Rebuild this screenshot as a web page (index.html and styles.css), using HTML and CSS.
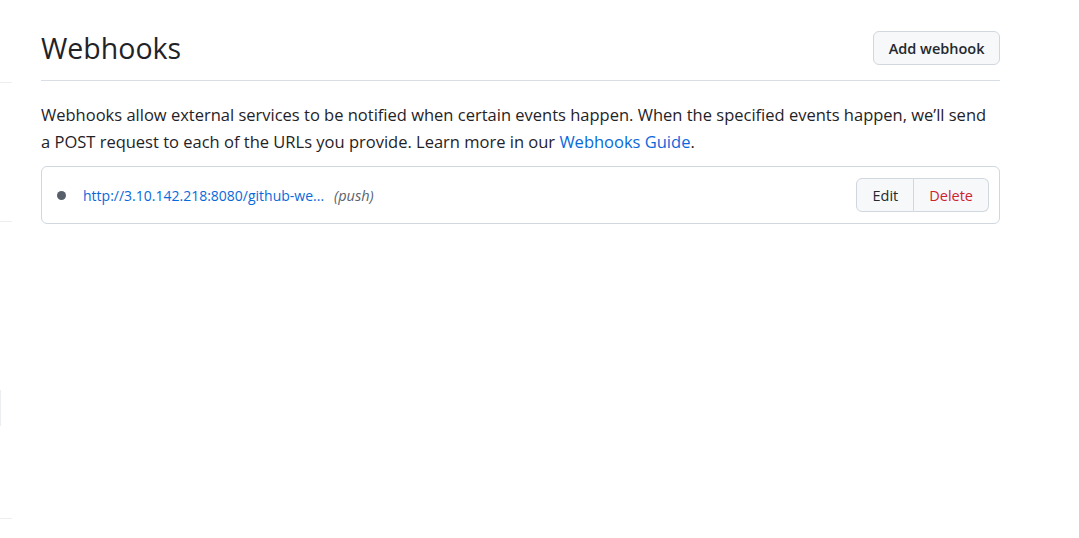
FILE: index.html
```html
<!DOCTYPE html>
<html lang="en">
<head>
<meta charset="utf-8">
<title>Webhooks</title>
<link rel="stylesheet" href="styles.css">
</head>
<body>
<div class="page">
  <aside class="sidebar">
    <div class="side-line side-a"></div>
    <div class="side-line side-b"></div>
    <div class="side-vert"></div>
    <div class="side-line side-c"></div>
  </aside>
  <main class="content">
    <div class="subhead">
      <h2 class="subhead-title">Webhooks</h2>
      <button class="btn btn-add">Add webhook</button>
    </div>
    <p class="intro">Webhooks allow external services to be notified when certain events happen. When the specified events happen, we’ll send a POST request to each of the URLs you provide. Learn more in our <a href="#" class="link">Webhooks Guide</a>.</p>
    <div class="hook-box">
      <div class="hook-row">
        <span class="dot"></span>
        <a href="#" class="hook-url">http://3.10.142.218:8080/github-we...</a>
        <span class="hook-events">(push)</span>
        <div class="btn-group">
          <button class="btn btn-sm">Edit</button>
          <button class="btn btn-sm btn-danger">Delete</button>
        </div>
      </div>
    </div>
  </main>
</div>
</body>
</html>
```
FILE: styles.css
```css
html, body {
  margin: 0;
  padding: 0;
  background: #ffffff;
}
body {
  font-family: "Open Sans", "Noto Sans", "Liberation Sans", sans-serif;
  color: #1f2328;
}
.page {
  display: flex;
  width: 1079px;
  height: 538px;
  overflow: hidden;
}
.sidebar {
  width: 12px;
  flex: none;
  display: flex;
  flex-direction: column;
}
.side-line {
  height: 1px;
  background: #eceef0;
}
.side-a { margin-top: 82px; }
.side-b { margin-top: 138px; }
.side-vert {
  margin-top: 168px;
  width: 1px;
  height: 36px;
  background: #eceef0;
}
.side-c { margin-top: 92px; }
.content {
  margin-left: 29px;
  width: 959px;
  padding-top: 31px;
}
.subhead {
  display: flex;
  align-items: center;
  justify-content: space-between;
  padding-bottom: 15px;
  border-bottom: 1px solid #d8dee4;
}
.subhead-title {
  margin: 0;
  font-size: 28.5px;
  font-weight: 400;
  line-height: 34px;
}
.btn {
  font-family: inherit;
  font-size: 14.5px;
  font-weight: 600;
  color: #24292f;
  background: #f6f8fa;
  border: 1px solid #d0d7de;
  border-radius: 6px;
  height: 34px;
  padding: 0 16px;
  cursor: pointer;
}
.btn-add {
  padding: 0 14.5px;
}
.intro {
  margin: 20px 0 11px;
  padding-right: 10px;
  font-size: 16.5px;
  line-height: 27px;
}
.link {
  color: #0969da;
  text-decoration: none;
}
.hook-box {
  border: 1px solid #d0d7de;
  border-radius: 6px;
}
.hook-row {
  display: flex;
  align-items: center;
  padding: 11px 10px 11px 15px;
}
.dot {
  width: 9px;
  height: 9px;
  border-radius: 50%;
  background: #57606a;
  margin-right: 17px;
}
.hook-url {
  color: #0969da;
  text-decoration: none;
  font-size: 14px;
}
.hook-events {
  margin-left: 10px;
  font-size: 14.5px;
  font-style: italic;
  color: #59636e;
}
.btn-group {
  margin-left: auto;
  display: flex;
}
.btn-sm {
  padding: 0 15px;
  font-weight: 500;
}
.btn-group .btn-sm:first-child {
  border-radius: 6px 0 0 6px;
}
.btn-group .btn-sm:last-child {
  border-radius: 0 6px 6px 0;
  border-left: 0;
}
.btn-danger {
  color: #cf222e;
}
```
